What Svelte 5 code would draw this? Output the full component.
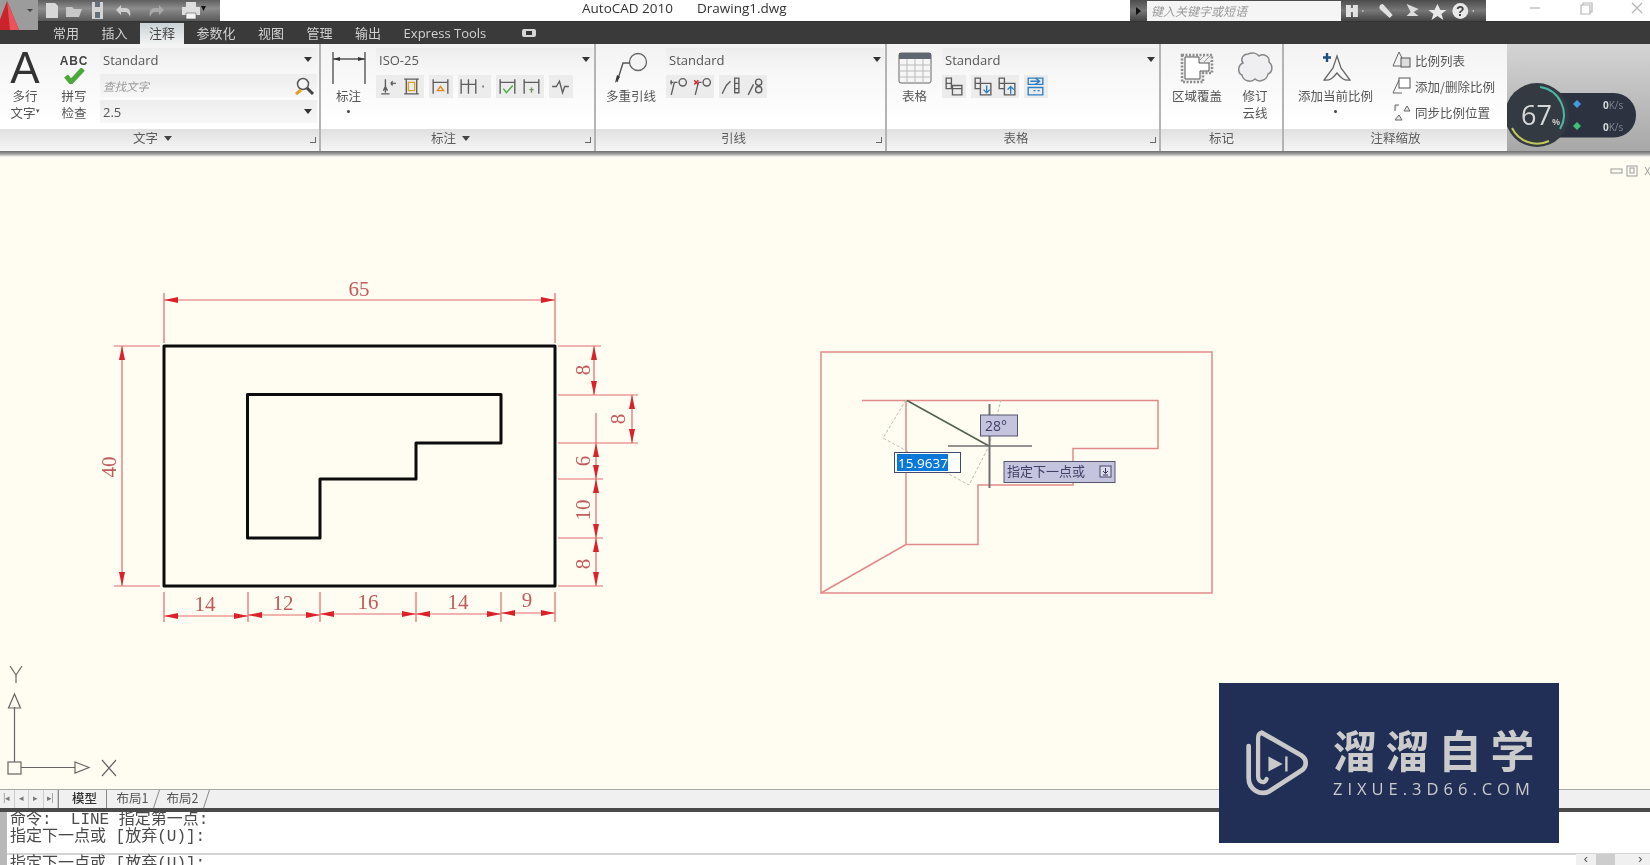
<!--
	AutoCAD 2010 window: title bar, ribbon, model space drawing, layout tabs and command line.
	The drawing svg uses screen coordinates in its viewBox so dimensions read off directly.
-->
<script>
	const tabs = ['常用', '插入', '注释', '参数化', '视图', '管理', '输出', 'Express Tools'];

	const RED = '#dc2229';
	const LINE = '#e26a6a';

	function arrow(x, y, dir, len = 14, half = 3) {
		const d = { r: [1, 0], l: [-1, 0], u: [0, -1], d: [0, 1] }[dir];
		const bx = x - d[0] * len;
		const by = y - d[1] * len;
		return `${x},${y} ${bx + d[1] * half},${by + d[0] * half} ${bx - d[1] * half},${by - d[0] * half}`;
	}

	// horizontal dimensions along the bottom: from, to, line y, label x, label y
	const bottomDims = [
		{ a: 164, b: 248, y: 615, tx: 205, ty: 610, t: '14' },
		{ a: 248, b: 320, y: 614, tx: 283, ty: 609, t: '12' },
		{ a: 320, b: 416, y: 613, tx: 368, ty: 608, t: '16' },
		{ a: 416, b: 501, y: 613, tx: 458, ty: 608, t: '14' },
		{ a: 501, b: 555, y: 612, tx: 527, ty: 606, t: '9' }
	];
	const bottomExt = [164, 248, 320, 416, 501, 555];

	// vertical dimensions on the right: from, to, line x, label x, label y
	const rightDims = [
		{ a: 345, b: 394, x: 594, tx: 590, ty: 369, t: '8' },
		{ a: 394, b: 442, x: 632, tx: 625, ty: 418, t: '8' },
		{ a: 442, b: 478, x: 596, tx: 590, ty: 460, t: '6' },
		{ a: 478, b: 537, x: 596, tx: 590, ty: 509, t: '10' },
		{ a: 537, b: 585, x: 596, tx: 590, ty: 563, t: '8' }
	];
	const rightExt = [
		[345, 601],
		[394, 638],
		[442, 638],
		[478, 603],
		[537, 603],
		[585, 603]
	];

	const G = '#5d5d5d';
	const icons = {
		d1: [['M9 4v13M5 18h8M7 15l2-4 2 4M14 8h5M14 8l2-2M14 8l2 2', G]],
		d2: [['M4 4h14M4 18h14M6 4v14M16 4v14', G], ['M8 7h6v8H8z', '#d9a520']],
		d3: [['M4 4v14M18 4v14M4 7h14', G], ['M11 11l-3 4h6z', '#e08a1e']],
		d4: [['M3 4v14M10 4v14M17 4v14M3 9h14', G], ['M24 10v2', G]],
		d5: [['M4 4v14M18 4v14M4 7h14', G], ['M7 13l3 4 6-7', '#4aa93c']],
		d6: [['M4 4v14M18 4v14M4 7h14', G], ['M11 12v5M9 14h4', '#6f9a55']],
		d7: [['M3 11h4l3-5 3 11 2-6h4', G]],
		l1: [['M5 19l3-12h3', G], ['M4 7h3M5 5v4', G], ['M16 7m-3.5 0a3.5 3.5 0 1 0 7 0a3.5 3.5 0 1 0-7 0', G]],
		l2: [['M5 19l3-12h3', G], ['M4 5l4 4M8 5l-4 4', RED], ['M16 7m-3.5 0a3.5 3.5 0 1 0 7 0a3.5 3.5 0 1 0-7 0', G]],
		l3: [['M3 18l4-8 4-4M15 3h4v14h-4zM15 8h4M15 13h4', G]],
		l4: [['M5 19l5-10M15 7m-3 0a3 3 0 1 0 6 0a3 3 0 1 0-6 0M15 14m-3 0a3 3 0 1 0 6 0a3 3 0 1 0-6 0', G]],
		t1: [['M4 3h5v5H4zM4 8h5v5H4zM10 10h9v9H10zM10 13h9', G]],
		t2: [['M4 3h5v5H4zM4 8h5v5H4zM9 8h10v11H9z', G], ['M15 10v7M12 14l3 3 3-3', '#2d7fc4']],
		t3: [['M4 3h5v5H4zM4 8h5v5H4zM9 8h10v11H9z', G], ['M15 18v-7M12 14l3-3 3 3', '#2d7fc4']],
		t4: [['M4 3h14v6H4zM4 12h14v7H4z', '#2d7fc4'], ['M6 6h8M11 3l4 3-4 3M9 15h2M13 15h2', '#2d7fc4']]
	};
</script>

{#snippet combo(label, italic = false, search = false)}
	<div class="combo" class:italic>
		<span>{label}</span>
		{#if search}
			<svg class="search" width="22" height="20" viewBox="0 0 22 20">
				<circle cx="10" cy="8" r="5.5" fill="#f5f5f5" stroke="#555" stroke-width="1.5" />
				<path d="M14 12l6 6" stroke="#444" stroke-width="3" />
				<path d="M8 14l-5 4" stroke="#e0a020" stroke-width="3" />
			</svg>
		{:else}
			<i class="caret"></i>
		{/if}
	</div>
{/snippet}

{#snippet toolGroup(names, wide = false)}
	<div class="group" class:wide>
		{#each names as name}
			<svg width={wide ? 33 : 24} height="23" viewBox="0 0 {wide ? 30 : 22} 22" preserveAspectRatio="xMinYMid">
				{#each icons[name] as p}
					<path d={p[0]} stroke={p[1]} fill="none" stroke-width="1.3" />
				{/each}
			</svg>
		{/each}
	</div>
{/snippet}

<div class="app">
	<header class="titlebar">
		<div class="logo">
			<svg width="30" height="30" viewBox="0 0 30 30">
				<path d="M2 30L13 1l12 29z" fill="#c9232c" />
				<path d="M13 1l12 29h-9z" fill="#e8545a" />
			</svg>
			<i class="mini-caret"></i>
		</div>
		<div class="qat">
			<svg width="170" height="21" viewBox="0 0 170 21">
				<path d="M8 3h9l3 3v12H8z" fill="#d8d8d8" />
				<path d="M28 7h6l2 2h8l-3 8H28z" fill="#c7c7c7" />
				<path d="M54 2h11v17H54z" fill="#d4d4d4" />
				<path d="M57 2h5v5h-5zM57 12h5v6h-5z" fill="#64707c" />
				<path d="M78 10l5-5v3h4c5 0 6 4 5 9-1-3-2-5-5-5h-4v3z" fill="#cfcfcf" />
				<path d="M126 10l-5-5v3h-4c-5 0-6 4-5 9 1-3 2-5 5-5h4v3z" fill="#a9a9a9" />
				<path d="M148 2h10v5h-10zM144 7h18v8h-18z" fill="#dedede" />
				<path d="M148 13h10v6h-10z" fill="#f4f4f4" stroke="#555" stroke-width=".6" />
				<path d="M166 6h5l-2.500 5z" fill="#111" transform="translate(-3 0)" />
			</svg>
		</div>
		<div class="title">
			<span>AutoCAD 2010</span>
			<span>Drawing1.dwg</span>
		</div>
		<div class="infocenter">
			<i class="play"></i>
			<div class="keyword">键入关键字或短语</div>
			<svg width="146" height="20" viewBox="0 0 146 20">
				<path d="M5 4h5v12H5zM12 4h5v12h-5zM9 7h4v4H9z" fill="#e2e2e2" />
				<path d="M22 9v2" stroke="#ddd" />
				<path d="M42 3c-3 0-4 3-3 5l10 9 3-3-9-10z" fill="#e0e0e0" />
				<path d="M66 3l12 5-5 3 5 4H66l4-4z" fill="#dcdcdc" />
				<path d="M97 3l3 6h6l-5 4 2 6-6-4-6 4 2-6-5-4h6z" fill="#e8e8e8" />
				<circle cx="120" cy="10" r="8" fill="#e8e8e8" />
				<text x="120" y="15" class="help">?</text>
				<path d="M133 9v2" stroke="#ddd" />
			</svg>
		</div>
		<div class="winctl">
			<svg width="164" height="20" viewBox="0 0 164 20">
				<path d="M44 8h10" stroke="#b5b5b5" stroke-width="1.200" />
				<path d="M95 5h9v9h-9zM97 5V3h9v9h-2" stroke="#b5b5b5" fill="none" stroke-width="1.200" />
				<path d="M146 3l10 10M156 3l-10 10" stroke="#b5b5b5" stroke-width="1.200" />
			</svg>
		</div>
	</header>

	<nav class="tabs">
		{#each tabs as tab}
			<span class="tab" class:active={tab === '注释'}>{tab}</span>
		{/each}
		<svg class="tab-icon" width="14" height="10" viewBox="0 0 14 10">
			<rect x="0" y="1" width="14" height="8" rx="2" fill="#d6d6d6" />
			<rect x="4" y="3" width="6" height="4" fill="#333" />
		</svg>
	</nav>

	<section class="ribbon">
		<div class="panel p-text">
			<div class="body">
				<div class="big">
					<span class="big-a">A</span>
					<span class="lbl">多行<br />文字<sup>▾</sup></span>
				</div>
				<div class="big spell">
					<span class="abc">ABC</span>
					<svg width="26" height="16" viewBox="0 0 26 16"><path d="M5 8l5 6L22 1" stroke="#4da83a" stroke-width="5" fill="none" /></svg>
					<span class="lbl">拼写<br />检查</span>
				</div>
				<div class="combos">
					{@render combo('Standard')}
					{@render combo('查找文字', true, true)}
					{@render combo('2.5')}
				</div>
			</div>
			<div class="ptitle">文字 <i class="tcaret"></i><i class="launch"></i></div>
		</div>

		<div class="panel p-dim">
			<div class="body">
				<div class="big wide">
					<svg width="36" height="36" viewBox="0 0 36 36">
						<path d="M2 2v32M34 2v32M2 9h32" stroke="#555" stroke-width="1.400" fill="none" />
						<path d="M2 9l7-2v4zM34 9l-7-2v4z" fill="#333" />
					</svg>
					<span class="lbl">标注</span>
					<i class="dot"></i>
				</div>
				<div class="stack">
					{@render combo('ISO-25')}
					<div class="tools">
						{@render toolGroup(['d1', 'd2'])}
						{@render toolGroup(['d3'])}
						{@render toolGroup(['d4'], true)}
						{@render toolGroup(['d5', 'd6'])}
						{@render toolGroup(['d7'])}
					</div>
				</div>
			</div>
			<div class="ptitle">标注 <i class="tcaret"></i><i class="launch"></i></div>
		</div>

		<div class="panel p-leader">
			<div class="body">
				<div class="big wider">
					<svg width="36" height="34" viewBox="0 0 36 34">
						<circle cx="25" cy="11" r="8.500" fill="#f4f4f4" stroke="#666" stroke-width="1.300" />
						<path d="M4 31L10 12h7" stroke="#555" stroke-width="1.400" fill="none" />
						<path d="M2 32l2-8 3 2z" fill="#333" />
					</svg>
					<span class="lbl">多重引线</span>
				</div>
				<div class="stack">
					{@render combo('Standard')}
					<div class="tools">
						{@render toolGroup(['l1', 'l2'])}
						{@render toolGroup(['l3', 'l4'])}
					</div>
				</div>
			</div>
			<div class="ptitle">引线<i class="launch"></i></div>
		</div>

		<div class="panel p-table">
			<div class="body">
				<div class="big wide">
					<svg width="34" height="32" viewBox="0 0 34 32">
						<rect x="1" y="1" width="32" height="30" rx="2" fill="#f6f6f6" stroke="#666" />
						<rect x="1" y="1" width="32" height="6" fill="#606672" />
						<path d="M1 13h32M1 19h32M1 25h32M9 7v24M17 7v24M25 7v24" stroke="#bbb" />
					</svg>
					<span class="lbl">表格</span>
				</div>
				<div class="stack">
					{@render combo('Standard')}
					<div class="tools">
						{@render toolGroup(['t1'])}
						{@render toolGroup(['t2', 't3'])}
						{@render toolGroup(['t4'])}
					</div>
				</div>
			</div>
			<div class="ptitle">表格<i class="launch"></i></div>
		</div>

		<div class="panel p-markup">
			<div class="body">
				<div class="big">
					<svg width="34" height="32" viewBox="0 0 34 32">
						<path d="M2 3h30v18h-9v9H2z" fill="#eee" stroke="#8d8d8d" stroke-width="2.500" stroke-dasharray="2 1.500" />
						<path d="M20 8l5-5M24 10l7-7M28 12l4-4" stroke="#9a9a9a" />
						<path d="M5 5h14v6h10v8h-9v8H5z" fill="#fff" stroke="#555" />
					</svg>
					<span class="lbl">区域覆盖</span>
				</div>
				<div class="big">
					<svg width="36" height="32" viewBox="0 0 36 32">
						<path d="M11 2c4-2 9-1 11 2 4-3 11 0 10 6 4 3 4 10-1 12-1 6-9 9-13 5-4 4-12 2-13-4C0 21 1 13 6 11 3 7 6 2 11 2z" fill="#efeff2" stroke="#888" stroke-width="1.500" />
					</svg>
					<span class="lbl">修订<br />云线</span>
				</div>
			</div>
			<div class="ptitle">标记</div>
		</div>

		<div class="panel p-scale">
			<div class="body">
				<div class="big">
					<svg width="34" height="32" viewBox="0 0 34 32">
						<path d="M18 4l4 12 9 12c-6 1-9-2-13-7-4 5-7 8-13 7l9-12z" fill="#f6f6f6" stroke="#666" stroke-width="1.300" />
						<path d="M8 1v9M4 5.500h8" stroke="#1d4f80" stroke-width="2.400" />
					</svg>
					<span class="lbl">添加当前比例</span>
					<i class="dot"></i>
				</div>
				<div class="rows">
					<div class="row">
						<svg width="20" height="18" viewBox="0 0 20 18"><path d="M7 1L1 15h9M7 1l4 8" stroke="#666" fill="none" /><rect x="9" y="7" width="9" height="9" fill="#ddd" stroke="#555" /></svg>
						比例列表
					</div>
					<div class="row">
						<svg width="20" height="18" viewBox="0 0 20 18"><path d="M7 3L1 16h9" stroke="#666" fill="none" /><rect x="7" y="1" width="11" height="10" fill="#fff" stroke="#555" /></svg>
						添加/删除比例
					</div>
					<div class="row">
						<svg width="20" height="18" viewBox="0 0 20 18"><path d="M3 8V2h4M12 8l3-5 3 5zM7 12l3 5H3z" stroke="#666" fill="#e8e8e8" /></svg>
						同步比例位置
					</div>
				</div>
			</div>
			<div class="ptitle">注释缩放</div>
		</div>

		<div class="gauge">
			<svg width="144" height="107" viewBox="1506 44 144 107">
				<rect x="1530" y="93" width="105" height="44.500" rx="22" fill="#2c3240" />
				<circle cx="1536" cy="115" r="32" fill="#343a42" />
				<path d="M1539 87a28 28 0 0 1 20 42" stroke="#4fb6a5" stroke-width="2" fill="none" />
				<path d="M1511 128a28 28 0 0 0 37 13" stroke="#c2c75a" stroke-width="2" fill="none" />
				<text x="1520" y="125" class="pct">67</text>
				<text x="1551" y="125" class="pct-sign">%</text>
				<path d="M1576 100l4 4-4 4-4-4z" fill="#3f9be0" />
				<path d="M1576 122l4 4-4 4-4-4z" fill="#3fc07a" />
				<text x="1602" y="109" class="speed">0<tspan class="unit">K/s</tspan></text>
				<text x="1602" y="131" class="speed">0<tspan class="unit">K/s</tspan></text>
			</svg>
		</div>
	</section>
	<div class="ribbon-edge"></div>

	<main class="canvas">
		<svg class="drawing" viewBox="0 156 1650 632" width="1650" height="632">
			<!-- viewport controls -->
			<g stroke="#9a9a9a" fill="none">
				<rect x="1611" y="168" width="11" height="4" />
				<rect x="1627" y="165" width="10" height="10" />
				<rect x="1630" y="167" width="4" height="5" />
				<path d="M1645 166l5 8M1650 166l-5 8" />
			</g>

			<!-- part outline -->
			<rect x="164" y="345" width="391" height="240" fill="none" stroke="#0c0c0c" stroke-width="3" stroke-linejoin="round" />
			<path d="M247.500 393.500H501V442H416V478H320V537H247.500Z" fill="none" stroke="#0c0c0c" stroke-width="3" stroke-linejoin="round" />

			<!-- overall width and height -->
			<g stroke={LINE} stroke-width="1.200">
				<path d="M164 292v50M555 292v50M164 299H555" />
				<path d="M114 345h46M114 585h46M122 345V585" />
				{#each bottomExt as x}
					<path d="M{x} 591v30" />
				{/each}
				{#each bottomDims as d}
					<path d="M{d.a} {d.y}H{d.b}" />
				{/each}
				{#each rightExt as e}
					<path d="M558 {e[0]}H{e[1]}" />
				{/each}
				<path d="M594 345v49M632 394v48M596 412V585" />
			</g>
			<g fill={RED}>
				<polygon points={arrow(164, 299, 'l')} />
				<polygon points={arrow(555, 299, 'r')} />
				<polygon points={arrow(122, 345, 'u')} />
				<polygon points={arrow(122, 585, 'd')} />
				{#each bottomDims as d}
					<polygon points={arrow(d.a, d.y, 'l')} />
					<polygon points={arrow(d.b, d.y, 'r')} />
				{/each}
				{#each rightDims as d}
					<polygon points={arrow(d.x, d.a, 'u')} />
					<polygon points={arrow(d.x, d.b, 'd')} />
				{/each}
			</g>
			<text class="dim" x="359" y="295">65</text>
			<text class="dim" transform="translate(116 466) rotate(-90)">40</text>
			{#each bottomDims as d}
				<text class="dim" x={d.tx} y={d.ty}>{d.t}</text>
			{/each}
			{#each rightDims as d}
				<text class="dim" transform="translate({d.tx} {d.ty}) rotate(-90)">{d.t}</text>
			{/each}

			<!-- copy being traced -->
			<g fill="none" stroke="#e28a8a" stroke-width="1.500">
				<rect x="821" y="351" width="391" height="241" />
				<path d="M862 399.500H1158V447.500H1073V484H978V543.500H906V399.500M906 543.500L821 592" />
			</g>
			<path d="M906 399L883 437L969 484L989 445M989 445L1001 399" fill="none" stroke="#bdbdb0" stroke-dasharray="3 2" />
			<path d="M907 399.500L989 445" stroke="#55604f" stroke-width="1.500" />
			<path d="M989.500 403V487" stroke="#707070" stroke-width="2" />
			<path d="M948 445H1032" stroke="#707070" stroke-width="1.500" />

			<rect x="980.500" y="414" width="37" height="21" fill="#c4c4de" stroke="#55556e" />
			<text class="tip" x="985" y="430">28°</text>

			<rect x="894.500" y="451.500" width="66" height="20" fill="#fff" stroke="#44486a" />
			<rect x="897" y="453" width="51" height="17" fill="#0a78d6" />
			<text class="tip sel" x="898" y="467">15.9637</text>

			<rect x="1004" y="460.500" width="111" height="21" fill="#c4c4de" stroke="#55556e" />
			<text class="tip cjk" x="1007" y="475">指定下一点或</text>
			<rect x="1100" y="465" width="11" height="11" fill="#dcdcec" stroke="#44446a" />
			<path d="M1105.500 467v5M1103 470l2.500 2.500 2.500-2.500M1103 474h5" stroke="#33335a" fill="none" />

			<!-- UCS icon -->
			<g stroke="#666" fill="none" stroke-width="1.200">
				<rect x="8" y="761" width="13" height="12" />
				<path d="M14.500 761V706M21 766.500H75" />
				<path d="M14.500 693l6 14h-12zM75 761l14 5.500-14 5.500z" />
				<path d="M10 665l6 9 6-9M16 674v8M102 759l14 16M116 759l-14 16" />
			</g>
		</svg>
	</main>

	<div class="layouts">
		<div class="nav">
			{#each ['|◂', '◂', '▸', '▸|'] as n}
				<span>{n}</span>
			{/each}
		</div>
		<span class="ltab active"><span>模型</span></span>
		<span class="ltab"><span>布局1</span></span>
		<span class="ltab"><span>布局2</span></span>
	</div>

	<section class="cmd">
		<div class="history">
			<div>命令:  LINE 指定第一点:</div>
			<div>指定下一点或 [放弃(U)]:</div>
		</div>
		<div class="prompt">指定下一点或 [放弃(U)]:</div>
		<div class="scroll">
			<span>‹</span>
			<i></i>
			<span>›</span>
		</div>
	</section>

	<aside class="watermark">
		<svg width="66" height="68" viewBox="0 0 70 72">
			<path d="M20 4L62 28c6 4 6 12 0 16L28 66c-10 5-22-2-22-14V18" fill="none" stroke="#c9c9c9" stroke-width="5" stroke-linecap="round" />
			<path d="M20 4c-3 0-4 3-4 6v40c0 6 7 9 9 3" fill="none" stroke="#c9c9c9" stroke-width="4.500" stroke-linecap="round" />
			<path d="M27 29l15 8-15 8z" fill="#c9c9c9" />
			<path d="M46 29v16" stroke="#c9c9c9" stroke-width="2.500" />
		</svg>
		<div class="brand">
			<div class="cn">溜溜自学</div>
			<div class="en">ZIXUE.3D66.COM</div>
		</div>
	</aside>
</div>

<style>
	:global(body) {
		margin: 0;
		overflow: hidden;
	}
	.app {
		position: relative;
		display: flex;
		flex-direction: column;
		width: 1650px;
		height: 865px;
		overflow: hidden;
		background: #fffcf2;
		font-family: "Noto Sans CJK SC", "Open Sans", sans-serif;
		color: #555;
		filter: blur(0.5px);
	}

	.titlebar {
		display: flex;
		flex: none;
		height: 22px;
		background: #fff;
		border-bottom: 1px solid #333;
		box-sizing: border-box;
	}
	.logo {
		display: flex;
		align-items: flex-start;
		width: 38px;
		height: 30px;
		background: #9c9c9c;
		overflow: hidden;
		position: relative;
		z-index: 2;
		flex: none;
	}
	.logo svg {
		margin-left: -6px;
	}
	.mini-caret {
		width: 0;
		height: 0;
		margin: 9px 0 0 3px;
		border: 3px solid transparent;
		border-top-color: #444;
	}
	.qat {
		width: 182px;
		flex: none;
		height: 21px;
		background: linear-gradient(#5f5f5f, #8d8d8d 40%, #5a5a5a);
	}
	.title {
		display: flex;
		gap: 24px;
		width: 910px;
		flex: none;
		padding-left: 362px;
		box-sizing: border-box;
		font: 13.500px/17px "Open Sans", sans-serif;
		color: #333;
	}
	.infocenter {
		display: flex;
		flex: none;
		width: 356px;
		height: 21px;
		background: linear-gradient(#4c4c4c, #777 50%, #444);
		align-items: center;
	}
	.play {
		width: 0;
		height: 0;
		margin: 0 6px 0 6px;
		border: 4px solid transparent;
		border-left: 5px solid #111;
		border-right: 0;
	}
	.keyword {
		width: 195px;
		height: 20px;
		background: #f5f5f5;
		color: #999;
		font-style: italic;
		font-size: 12px;
		line-height: 19px;
		padding-left: 4px;
		box-sizing: border-box;
	}
	.help {
		font: bold 14px "Liberation Sans", sans-serif;
		fill: #444;
		text-anchor: middle;
	}
	.winctl {
		flex: 1;
	}

	.tabs {
		display: flex;
		align-items: flex-end;
		flex: none;
		height: 22px;
		padding-left: 43px;
		background: #3a3a3a;
	}
	.tab {
		padding: 0 10px;
		margin-right: 2.500px;
		height: 21px;
		line-height: 20px;
		font-size: 13px;
		color: #d2d2d2;
	}
	.tab.active {
		padding: 0 9px;
		background: linear-gradient(#c9d2d6, #f3f3f3);
		color: #444;
	}
	.tab:last-of-type {
		font-family: "Open Sans", sans-serif;
		margin-right: 0;
	}
	.tab-icon {
		margin: 0 0 6px 26px;
	}

	.ribbon {
		display: flex;
		flex: none;
		height: 107px;
	}
	.panel {
		display: flex;
		flex-direction: column;
		flex: none;
		box-sizing: border-box;
		border-right: 2px solid #b4b4b4;
		background: linear-gradient(#f3f3f3, #fff 75%);
	}
	.p-text {
		width: 321px;
	}
	.p-dim {
		width: 275px;
	}
	.p-leader {
		width: 291px;
	}
	.p-table {
		width: 274px;
	}
	.p-markup {
		width: 123px;
	}
	.p-scale {
		width: 223px;
		border-right: 0;
	}
	.body {
		display: flex;
		flex: 1;
		padding-top: 3px;
		box-sizing: border-box;
		min-height: 0;
	}
	.p-markup .body {
		padding-left: 11px;
		gap: 8px;
	}
	.p-scale .body {
		padding-left: 14px;
		gap: 19px;
	}
	.ptitle {
		position: relative;
		flex: none;
		height: 22px;
		text-align: center;
		font-size: 12.500px;
		line-height: 18px;
		color: #5c5c5c;
		background: linear-gradient(#e0e0e0, #f6f6f6);
		box-sizing: border-box;
	}
	.ptitle:has(.launch) {
		padding-right: 14px;
	}
	.tcaret {
		display: inline-block;
		margin-left: 3px;
		border: 4px solid transparent;
		border-top: 5px solid #444;
		border-bottom: 0;
		vertical-align: 2px;
	}
	.launch {
		position: absolute;
		right: 3px;
		top: 8px;
		width: 5px;
		height: 5px;
		border-right: 1.500px solid #666;
		border-bottom: 1.500px solid #666;
	}

	.big {
		display: flex;
		flex-direction: column;
		align-items: center;
		flex: none;
		position: relative;
		min-width: 50px;
	}
	.big.wide {
		width: 55px;
	}
	.big.wider {
		width: 70px;
	}
	.big svg {
		height: 36px;
		margin: 3px 0 2px;
	}
	.lbl {
		font-size: 12.500px;
		line-height: 16.500px;
		color: #555;
		text-align: center;
		white-space: nowrap;
	}
	.lbl sup {
		font-size: 7px;
		line-height: 0;
	}
	.big-a {
		font: 44px/36px "Liberation Sans", sans-serif;
		color: #333;
		height: 37px;
		margin: 3px 0 1px;
	}
	.spell {
		width: 52px;
		margin-left: -2px;
	}
	.abc {
		margin-top: 8px;
		font: bold 12px/13px "Liberation Sans", sans-serif;
		letter-spacing: 0.800px;
		color: #444;
	}
	.spell svg {
		margin: 0 0 4px;
		height: 16px;
	}
	.dot {
		width: 3px;
		height: 3px;
		margin-top: 5px;
		background: #444;
		border-radius: 50%;
	}

	.combos {
		display: flex;
		flex-direction: column;
		gap: 3px;
		flex: none;
		width: 217px;
		margin-top: 1px;
	}
	.stack {
		display: flex;
		flex-direction: column;
		flex: 1;
		margin: 1px 1px 0 0;
		gap: 4px;
	}
	.combo {
		position: relative;
		display: flex;
		align-items: center;
		height: 23px;
		padding-left: 3px;
		font: 13px "Open Sans", sans-serif;
		color: #555;
		background: linear-gradient(#ededed, #f7f7f7);
	}
	.combo.italic {
		font-family: "Noto Sans CJK SC", sans-serif;
		font-style: italic;
		font-size: 11.500px;
		color: #9a9a9a;
	}
	.caret {
		position: absolute;
		right: 3px;
		top: 9px;
		border: 4px solid transparent;
		border-top: 5px solid #333;
		border-bottom: 0;
	}
	.combos .caret {
		right: 5px;
	}
	.search {
		position: absolute;
		right: 2px;
		top: 2px;
	}
	.tools {
		display: flex;
		gap: 5px;
	}
	.group {
		display: flex;
		height: 23px;
		background: #ececec;
	}
	.group svg {
		display: block;
		height: 23px;
		margin: 0;
	}
	.rows {
		display: flex;
		flex-direction: column;
		gap: 6px;
		margin-top: 3px;
	}
	.row {
		display: flex;
		align-items: center;
		gap: 3px;
		height: 20px;
		font-size: 12.500px;
		white-space: nowrap;
	}
	.gauge {
		flex: 1;
		background: linear-gradient(#d4d4d4, #a8a8a8);
	}
	.gauge svg {
		display: block;
	}
	.pct {
		font: 27px "Open Sans", sans-serif;
		fill: #d6d6d6;
	}
	.pct-sign {
		font: bold 9px "Open Sans", sans-serif;
		fill: #bcbcbc;
	}
	.speed {
		font: bold 10px "Open Sans", sans-serif;
		fill: #d8d8d8;
	}
	.unit {
		fill: #7f8590;
		font-weight: 400;
	}
	.ribbon-edge {
		flex: none;
		height: 6px;
		background: linear-gradient(#6e6e6e, #a0a0a0 50%, #fffcf2);
	}

	.canvas {
		flex: none;
		height: 632px;
	}
	.drawing {
		display: block;
	}
	.dim {
		font: 21px "Liberation Serif", serif;
		fill: #c15a5a;
		text-anchor: middle;
	}
	.tip {
		font: 14px "Open Sans", sans-serif;
		fill: #3f3f63;
	}
	.tip.sel {
		fill: #fff;
		font-size: 13.500px;
	}
	.tip.cjk {
		font-family: "Noto Sans CJK SC", sans-serif;
		font-size: 13px;
	}

	.layouts {
		display: flex;
		align-items: stretch;
		flex: none;
		height: 18px;
		background: #f0f0f0;
		border-top: 1px solid #a8a8a8;
		border-bottom: 4px solid #4a4a4a;
		font-size: 12.500px;
		line-height: 15px;
		color: #555;
	}
	.nav {
		display: flex;
		width: 58px;
		flex: none;
	}
	.nav span {
		flex: 1;
		text-align: center;
		font-size: 9px;
		color: #777;
		border-right: 1px solid #ccc;
	}
	.ltab {
		padding: 0 8px;
		margin-left: 1px;
		border-right: 1px solid #888;
		transform: skewX(-18deg);
	}
	.ltab > span {
		display: inline-block;
		transform: skewX(18deg);
	}
	.ltab.active {
		margin-left: 0;
		border-left: 1px solid #888;
		padding: 0 9px 0 13px;
		transform: none;
		color: #333;
		font-weight: 500;
	}
	.ltab.active > span {
		transform: none;
	}

	.cmd {
		flex: 1;
		position: relative;
		background: #fff;
		border-left: 7px solid #b8b8b8;
		box-sizing: border-box;
		font: 16px/17px "Liberation Mono", "Noto Sans CJK SC", monospace;
		color: #4a4a4a;
		min-height: 0;
	}
	.history {
		height: 43px;
		padding: 0 0 0 3px;
		box-sizing: border-box;
		border-bottom: 2px solid #d4d4d4;
	}
	.history div {
		white-space: pre;
	}
	.prompt {
		padding: 1px 0 0 3px;
		white-space: pre;
	}
	.scroll {
		position: absolute;
		right: 0;
		bottom: 0;
		display: flex;
		align-items: center;
		justify-content: space-between;
		width: 74px;
		height: 11px;
		background: #f0f0f0;
		font-size: 13px;
		line-height: 11px;
		color: #555;
	}
	.scroll i {
		width: 19px;
		height: 11px;
		background: #cdcdcd;
		margin-left: -16px;
	}
	.scroll span {
		padding: 0 6px;
	}

	.watermark {
		position: absolute;
		left: 1219px;
		top: 683px;
		display: flex;
		align-items: center;
		width: 340px;
		height: 160px;
		padding-left: 24px;
		box-sizing: border-box;
		background: #212f56;
	}
	.brand {
		margin-left: 24px;
		color: #cbcbcb;
	}
	.cn {
		font: 700 44px/42px "Noto Sans CJK SC", sans-serif;
		letter-spacing: 8.500px;
		white-space: nowrap;
	}
	.en {
		margin-top: 9px;
		font: 16.500px/20px "Open Sans", sans-serif;
		letter-spacing: 5px;
		white-space: nowrap;
	}
</style>
